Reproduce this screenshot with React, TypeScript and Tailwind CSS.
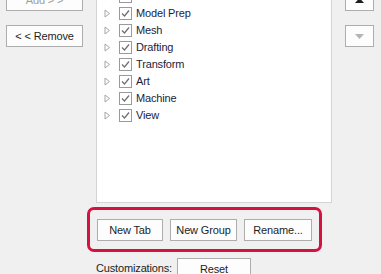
import React from 'react';

const tabs = ['Model Prep', 'Mesh', 'Drafting', 'Transform', 'Art', 'Machine', 'View'];

const Expander: React.FC = () => (
  <svg width="7" height="9" viewBox="0 0 7 9" className="shrink-0">
    <path d="M1 1 L5.5 4.5 L1 8 Z" fill="none" stroke="#a6a6a6" strokeWidth="1" />
  </svg>
);

const CheckBox: React.FC = () => (
  <span className="w-[13px] h-[13px] border border-[#9a9a9a] bg-white flex items-center justify-center shrink-0">
    <svg width="9" height="9" viewBox="0 0 9 9">
      <path d="M1 4.5 L3.5 7 L8 1.5" fill="none" stroke="#6e6e6e" strokeWidth="1.2" />
    </svg>
  </span>
);

const Row: React.FC<{ label: string }> = ({ label }) => (
  <div className="h-[17px] flex items-center pl-[7px]">
    <Expander />
    <span className="ml-[8px]">
      <CheckBox />
    </span>
    <span className="ml-[4px] text-[#1c1c3c] whitespace-nowrap">{label}</span>
  </div>
);

const btn =
  'h-[22px] bg-[#fdfdfd] border border-[#adadad] flex items-center justify-center text-[#1e1e1e] whitespace-nowrap';

const App: React.FC = () => {
  return (
    <div
      className="w-[381px] h-[274px] bg-[#f0f0f0] overflow-hidden text-[11px] tracking-[-0.15px]"
      style={{ fontFamily: '"Liberation Sans", Arial, sans-serif' }}
    >
      <div className="-mt-[14px] flex items-start">
        {/* botones izquierdos */}
        <div className="w-[96px] pl-[6px] pt-[3px] flex flex-col gap-[14px]">
          <div className={`${btn} w-[77px] text-[#a0a0a0]`}>Add &gt; &gt;</div>
          <div className={`${btn} w-[77px]`}>&lt; &lt; Remove</div>
        </div>

        {/* lista de pestañas */}
        <div className="w-[236px] h-[217px] bg-white border border-[#d4d4d4] pt-[1px]">
          <Row label="Home" />
          {tabs.map((t) => (
            <Row key={t} label={t} />
          ))}
        </div>

        {/* flechas */}
        <div className="ml-[13px] pt-[3px] flex flex-col gap-[14px]">
          <div className={`${btn} w-[29px]`}>
            <svg width="9" height="5" viewBox="0 0 9 5">
              <path d="M0 5 L4.5 0 L9 5 Z" fill="#1e1e1e" />
            </svg>
          </div>
          <div className={`${btn} w-[29px]`}>
            <svg width="9" height="5" viewBox="0 0 9 5">
              <path d="M0 0 L4.5 5 L9 0 Z" fill="#b4b4b4" />
            </svg>
          </div>
        </div>
      </div>

      {/* grupo de botones resaltado */}
      <div className="ml-[87px] mt-[4px] w-[235px] h-[45px] border-[3px] border-[#d4123f] rounded-[7px] pl-[7px] pt-[9px] flex gap-[7px]">
        <div className={`${btn} w-[66px]`}>New Tab</div>
        <div className={`${btn} w-[67px]`}>New Group</div>
        <div className={`${btn} w-[68px]`}>Rename...</div>
      </div>

      <div className="mt-[6px] ml-[96px] flex items-start">
        <span className="w-[81px] pt-[2px] text-[#1e1e1e] whitespace-nowrap">Customizations:</span>
        <div className={`${btn} w-[74px]`}>Reset</div>
      </div>
    </div>
  );
};

export default App;
